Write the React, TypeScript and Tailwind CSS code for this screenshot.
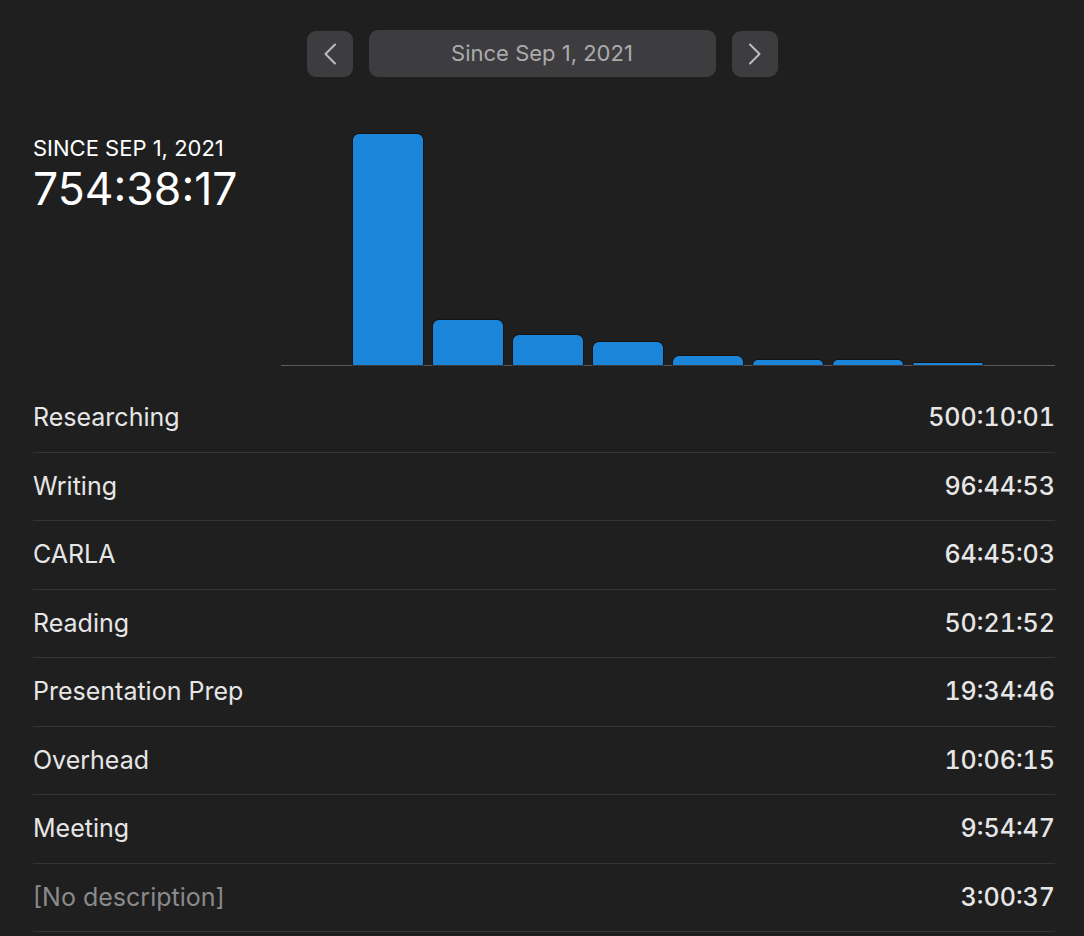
import React from "react";

const rows = [
  { label: "Researching", value: "500:10:01", secs: 500 * 3600 + 10 * 60 + 1 },
  { label: "Writing", value: "96:44:53", secs: 96 * 3600 + 44 * 60 + 53 },
  { label: "CARLA", value: "64:45:03", secs: 64 * 3600 + 45 * 60 + 3 },
  { label: "Reading", value: "50:21:52", secs: 50 * 3600 + 21 * 60 + 52 },
  { label: "Presentation Prep", value: "19:34:46", secs: 19 * 3600 + 34 * 60 + 46 },
  { label: "Overhead", value: "10:06:15", secs: 10 * 3600 + 6 * 60 + 15 },
  { label: "Meeting", value: "9:54:47", secs: 9 * 3600 + 54 * 60 + 47 },
  { label: "[No description]", value: "3:00:37", secs: 3 * 3600 + 37, muted: true },
];

const maxSecs = rows[0].secs;
const CHART_H = 232;

function Chevron({ dir }: { dir: "left" | "right" }) {
  return (
    <svg width="14" height="22" viewBox="0 0 14 22" fill="none">
      <path
        d={dir === "left" ? "M12 1.5 L2.5 11 L12 20.5" : "M2 1.5 L11.5 11 L2 20.5"}
        stroke="#bdbdbf"
        strokeWidth="2"
        strokeLinecap="round"
        strokeLinejoin="round"
      />
    </svg>
  );
}

export default function App() {
  return (
    <div
      className="w-full min-h-[936px] bg-[#1f1f1f] text-[#e8e8e8] overflow-hidden"
      style={{ fontFamily: "Inter, 'Liberation Sans', sans-serif" }}
    >
      {/* Nav */}
      <div className="flex justify-center items-center gap-4 pt-[30px]">
        <button className="w-[46px] h-[46px] rounded-[9px] bg-[#3d3d3f] flex items-center justify-center">
          <Chevron dir="left" />
        </button>
        <div className="w-[347px] h-[47px] rounded-[9px] bg-[#3d3d3f] flex items-center justify-center text-[22px] text-[#ababad]">
          Since Sep 1, 2021
        </div>
        <button className="w-[46px] h-[46px] rounded-[9px] bg-[#3d3d3f] flex items-center justify-center">
          <Chevron dir="right" />
        </button>
      </div>

      {/* Summary + chart */}
      <div className="flex pl-[33px] pr-[29px] mt-[57px]">
        <div className="w-[248px] shrink-0 pt-[1px]">
          <div className="text-[22px] leading-[27px] text-white">SINCE SEP 1, 2021</div>
          <div className="text-[44.5px] leading-[54px] text-white">754:38:17</div>
        </div>
        <div className="flex-1 h-[232px] flex items-end gap-[10px] pl-[72px] border-b border-[#5a5a5c]">
          {rows.map((r) => (
            <div
              key={r.label}
              className="w-[70px] rounded-t-[6px] bg-[#1b86d9] shadow-[0_0_0_1px_rgba(0,0,0,0.35)]"
              style={{ height: `${Math.max(2, (r.secs / maxSecs) * (CHART_H - 1))}px` }}
            />
          ))}
        </div>
      </div>

      {/* Rows */}
      <div className="pl-[33px] pr-[29px] mt-[18px]">
        {rows.map((r) => (
          <div
            key={r.label}
            className="h-[68.5px] flex items-center justify-between border-b border-[#353537]"
          >
            <span className={`text-[25px] ${r.muted ? "text-[#8a8a8c]" : "text-[#e6e6e6]"}`}>
              {r.label}
            </span>
            <span className="text-[25px] font-medium text-[#e6e6e6] tabular-nums">{r.value}</span>
          </div>
        ))}
      </div>
    </div>
  );
}
